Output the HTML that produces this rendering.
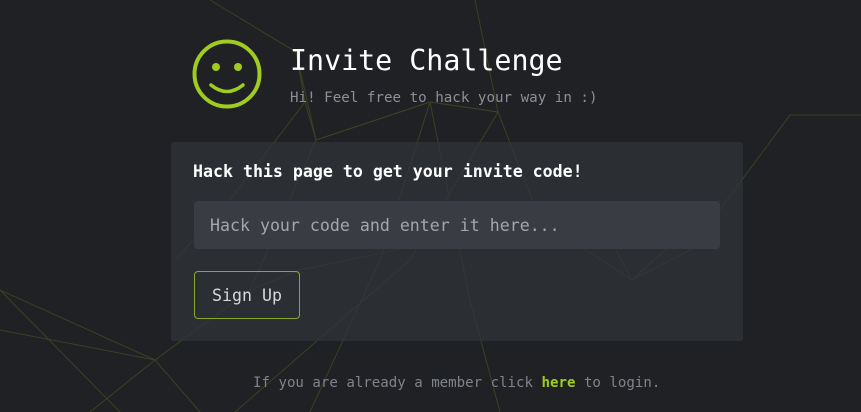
<!DOCTYPE html>
<html><head><style>
body{margin:0;width:861px;height:412px;background:#1f2125;overflow:hidden;position:relative;font-family:"DejaVu Sans Mono","Liberation Mono",monospace;}
svg.bg{position:absolute;left:0;top:0}
.t{position:absolute;white-space:nowrap}
.card{position:absolute;left:171px;top:142px;width:572px;height:199px;background:rgba(48,52,57,0.75);border-radius:3px}
.inp{position:absolute;left:194px;top:201px;width:526px;height:48px;background:#393d43;border-radius:4px}
.btn{position:absolute;left:194px;top:271px;width:104px;height:46px;border:1px solid #8aa82a;border-radius:4px}
</style></head><body>
<svg class="bg" width="861" height="412" stroke="#6b7d1e" stroke-width="1" fill="none" opacity="0.35">
<path d="M210 0 L296 52 L316 140 L430 102 L498 112 L475 0"/>
<path d="M296 52 L305 102 L316 140 L250 290 L155 360 L0 290"/>
<path d="M430 102 L498 112 L540 220 L632 280 L690 250 L790 115 L861 115"/>
<path d="M316 140 L430 102 L380 260 L310 412"/>
<path d="M430 102 L470 300 L500 412"/>
<path d="M498 112 L410 260 L235 412"/>
<path d="M155 360 L90 412 M155 360 L0 330 M155 360 L200 412"/>
<path d="M632 280 L600 220 M632 280 L720 200 M305 102 L230 200 L175 260"/>
<path d="M0 290 L120 412 M250 290 L300 270 L540 220"/>
</svg>
<svg class="t" style="left:191px;top:38px" width="72" height="72" viewBox="0 0 72 72">
<circle cx="36" cy="36" r="32.5" stroke="#9fcc1e" stroke-width="4" fill="none"/>
<circle cx="25" cy="29" r="4" fill="#9fcc1e"/><circle cx="47" cy="29" r="4" fill="#9fcc1e"/>
<path d="M20 47 Q36 60 52 47" stroke="#9fcc1e" stroke-width="3.5" fill="none" stroke-linecap="round"/>
</svg>
<div class="t" style="left:290px;top:44px;font-size:28.3px;color:#fff">Invite Challenge</div>
<div class="t" style="left:290px;top:90px;font-size:14.2px;color:#8c9096">Hi! Feel free to hack your way in :)</div>
<div class="card"></div>
<div class="t" style="left:193px;top:162px;font-size:16.6px;font-weight:bold;color:#fff">Hack this page to get your invite code!</div>
<div class="inp"></div>
<div class="t" style="left:210px;top:216px;font-size:16.6px;color:#a3a7ad">Hack your code and enter it here...</div>
<div class="btn"></div>
<div class="t" style="left:212px;top:286px;font-size:16.6px;color:#d6d8db">Sign Up</div>
<div class="t" style="left:253px;top:375px;font-size:14.1px;color:#7f848a">If you are already a member click <b style="color:#9fcc1e">here</b> to login.</div>
</body></html>
